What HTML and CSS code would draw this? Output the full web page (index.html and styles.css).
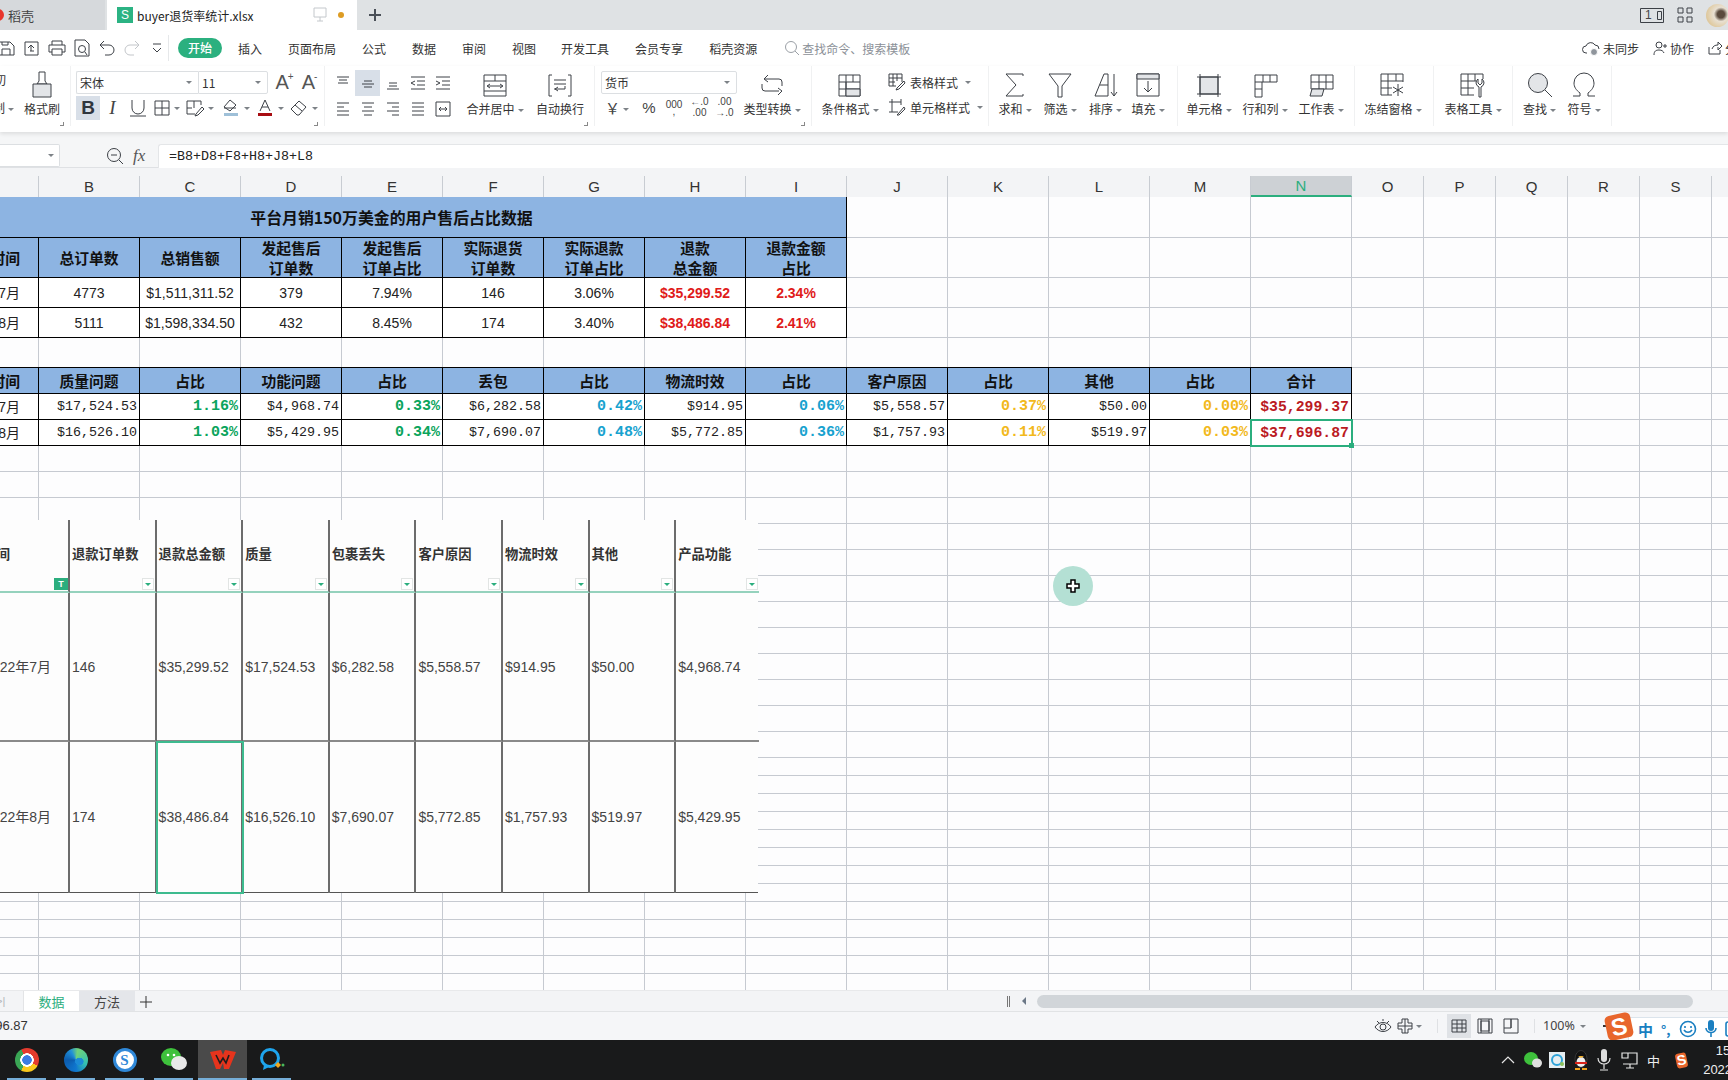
FILE: index.html
```html
<!DOCTYPE html>
<html lang="zh-CN">
<head>
<meta charset="utf-8">
<title>buyer退货率统计.xlsx</title>
<link rel="stylesheet" href="styles.css">
</head>
<body>
<div class="app">
  <header class="tabbar">
    <div class="tab-home"><span class="home-dot"></span><span>稻壳</span></div>
    <div class="tab-doc">
      <span class="s-logo">S</span><span class="doc-name">buyer退货率统计.xlsx</span>
      <svg class="doc-mon" width="14" height="16" viewBox="0 0 14 16"><path d="M1 1h12v9H1zM7 10v4M4 14h6"/></svg>
      <span class="doc-dot"></span>
    </div>
    <svg class="tab-plus" width="14" height="14" viewBox="0 0 14 14"><path d="M7 1v12M1 7h12"/></svg>
    <div class="tab-right">
      <svg class="ln" width="24" height="15" viewBox="0 0 24 15"><path d="M.5.5h23v14H.5zM17.500 3.500h4v8h-4z"/></svg>
      <span class="one">1</span>
      <svg class="ln grid4" width="16" height="16" viewBox="0 0 16 16"><path d="M1 1h5v5H1zM10 1h5v5h-5zM1 10h5v5H1zM10 10h5v5h-5z"/></svg>
      <span class="avatar"></span>
    </div>
  </header>

  <nav class="menubar">
    <div class="quick">
      <svg class="ln" width="18" height="18" viewBox="0 0 18 18"><path d="M1 3h11l4 4v9H1zM4 16v-6h8v6M4 3v3h6V3"/></svg>
      <svg class="ln" width="18" height="18" viewBox="0 0 18 18"><path d="M2 3h13v13H2zM5 9l3-3 3 3M8 6v6M7 12h4"/></svg>
      <svg class="ln" width="18" height="18" viewBox="0 0 18 18"><path d="M4 6V2h10v4M4 13H1V6h16v7h-3M4 10h10v6H4z"/></svg>
      <svg class="ln" width="18" height="18" viewBox="0 0 18 18"><path d="M2 1h10l4 4v12H2zM12 13l2 3"/><circle cx="9" cy="10" r="3.500"/></svg>
      <svg class="ln" width="18" height="18" viewBox="0 0 18 18"><path d="M6 2L2 6l4 4M2 6h9a5 5 0 010 10H7"/></svg>
      <svg class="ln light" width="18" height="18" viewBox="0 0 18 18"><path d="M12 2l4 4-4 4M16 6H7a5 5 0 000 10h4"/></svg>
      <svg class="ln" width="18" height="18" viewBox="0 0 18 18"><path d="M5 5h8M5 9l4 4 4-4"/></svg>
    </div>
    <span class="pill">开始</span>
    <span class="m m1">插入</span><span class="m m2">页面布局</span><span class="m m3">公式</span><span class="m m3">数据</span><span class="m m3">审阅</span><span class="m m3">视图</span><span class="m m4">开发工具</span><span class="m m5">会员专享</span><span class="m m6">稻壳资源</span>
    <span class="search">
      <svg class="ln" width="16" height="16" viewBox="0 0 16 16"><circle cx="7" cy="7" r="5.500"/><path d="M11 11l4 4"/></svg>
      查找命令、搜索模板
    </span>
    <div class="menu-right">
      <svg class="ln" width="18" height="16" viewBox="0 0 18 16"><path d="M5 13H4a3.500 3.500 0 010-7 5 5 0 019-1 4 4 0 014 4"/><circle class="fillgrey" cx="12" cy="12" r="3.500"/></svg>
      <span>未同步</span>
      <svg class="ln ms" width="14" height="15" viewBox="0 0 14 15"><circle cx="6" cy="4" r="3"/><path d="M1 14c0-4 2-5 5-5s4 1 5 3M10 5h4M12 3v4"/></svg>
      <span>协作</span>
      <svg class="ln ms" width="14" height="14" viewBox="0 0 14 14"><path d="M1 6v7h11V9M4 8c1-3 3-4 6-4V1l4 4-4 4V6"/></svg>
      <span>分享</span>
    </div>
  </nav>

  <section class="ribbon">
    <div class="g g0">
      <div class="clip-col"><span class="clip-a">切</span><span class="clip-b">制<i class="car"></i></span></div>
      <div class="big w48 ml4">
        <svg class="ln" width="28" height="28" viewBox="0 0 28 28"><path d="M11 1h6v9l2 3H9l2-3z"/><path class="fl" d="M5 13h18v13H5z"/></svg>
        <span class="lb">格式刷</span>
      </div>
      <i class="launch"></i>
    </div>

    <div class="g g1">
      <div class="two">
        <div class="row1">
          <div class="sel sel-font"><span class="sel-a">宋体</span><i class="car"></i></div>
          <div class="sel sel-size"><span class="sel-a">11</span><i class="car"></i></div>
          <span class="a-big">A<sup>+</sup></span><span class="a-big">A<sup>-</sup></span>
        </div>
        <div class="row2">
          <span class="t t-b">B</span>
          <span class="t w25 t-i">I</span>
          <span class="t w25"><svg class="ln" width="16" height="18" viewBox="0 0 16 18"><path d="M2 1v8a6 6 0 0012 0V1M0 17h16"/></svg></span>
          <span class="t w34"><svg class="ln" width="16" height="16" viewBox="0 0 16 16"><path d="M1 1h14v14H1zM8 1v14M1 8h14"/></svg><i class="car"></i></span>
          <span class="t w34 w35"><svg class="ln" width="18" height="18" viewBox="0 0 18 18"><path d="M1 2h14v4M1 2v13h8M8 2v7M1 9h5M10 15l6-7 2 2-6 6-3 1z"/></svg><i class="car"></i></span>
          <span class="t w34"><svg class="ln" width="18" height="18" viewBox="0 0 18 18"><path d="M8 1l6 5-6 6-6-4zM2 9h12"/><path class="blue" d="M2 14h14v3H2z"/></svg><i class="car"></i></span>
          <span class="t w34"><svg width="18" height="18" viewBox="0 0 18 18"><path class="ln" d="M4 12L9 1l5 11M6 8h6"/><path class="dred" d="M2 14h14v3H2z"/></svg><i class="car"></i></span>
          <span class="t w34"><svg class="ln" width="18" height="18" viewBox="0 0 18 18"><path d="M1 10l8-8 7 6-7 8H7zM5 6l7 6"/></svg><i class="car"></i></span>
        </div>
      </div>
      <i class="launch"></i>
    </div>

    <div class="g g2">
      <div class="two">
        <div class="row1 align">
          <span class="al"><svg class="ln" width="14" height="14" viewBox="0 0 14 14"><path d="M1 1h12M3 4h8M2 7h10"/></svg></span>
          <span class="al on"><svg class="ln" width="14" height="14" viewBox="0 0 14 14"><path d="M3 5h8M1 8h12M3 11h8"/></svg></span>
          <span class="al"><svg class="ln" width="14" height="14" viewBox="0 0 14 14"><path d="M3 7h8M3 10h8M1 13h12"/></svg></span>
          <span class="al"><svg class="ln" width="16" height="14" viewBox="0 0 16 14"><path d="M1 1h14M7 5h8M7 9h8M1 13h14M5 5L1 7l4 2"/></svg></span>
          <span class="al"><svg class="ln" width="16" height="14" viewBox="0 0 16 14"><path d="M1 1h14M7 5h8M7 9h8M1 13h14M1 5l4 2-4 2"/></svg></span>
        </div>
        <div class="row2 align">
          <span class="al"><svg class="ln" width="14" height="14" viewBox="0 0 14 14"><path d="M1 1h12M1 5h7M1 9h12M1 13h12"/></svg></span>
          <span class="al"><svg class="ln" width="14" height="14" viewBox="0 0 14 14"><path d="M1 1h12M3 5h8M1 9h12M3 13h8"/></svg></span>
          <span class="al"><svg class="ln" width="14" height="14" viewBox="0 0 14 14"><path d="M1 1h12M6 5h7M1 9h12M6 13h7"/></svg></span>
          <span class="al"><svg class="ln" width="14" height="14" viewBox="0 0 14 14"><path d="M1 1h12M1 5h12M1 9h12M1 13h12"/></svg></span>
          <span class="al"><svg class="ln" width="16" height="16" viewBox="0 0 16 16"><path d="M1 1v14M15 1v14M1 1h14M1 15h14M4 8h8M6 6L4 8l2 2M10 6l2 2-2 2"/></svg></span>
        </div>
      </div>
      <div class="big w64 ml8">
        <svg class="ln" width="28" height="28" viewBox="0 0 28 28"><path d="M3 4h22v21H3zM3 10h22M14 4v6M3 20h22M7 15h14M9 13l-3 2 3 2M19 13l3 2-3 2"/></svg>
        <span class="lb">合并居中<i class="car"></i></span>
      </div>
      <div class="big w66">
        <svg class="ln" width="28" height="28" viewBox="0 0 28 28"><path d="M6 4H3v21h3M22 4h3v21h-3M8 9h12M8 13h12M8 18h11v-3M12 16l-3 2 3 2"/></svg>
        <span class="lb">自动换行</span>
      </div>
      <i class="launch"></i>
    </div>

    <div class="g g3">
      <div class="two">
        <div class="row1"><div class="sel sel-num"><span class="sel-a">货币</span><i class="car"></i></div></div>
        <div class="row2 nums">
          <span class="n n-y">￥<i class="car"></i></span>
          <span class="n n-p">%</span>
          <span class="n n-k">000<b>,</b></span>
          <span class="n n-d">←.0<br>.00</span>
          <span class="n n-d">.00<br>→.0</span>
        </div>
      </div>
      <div class="big w70">
        <svg class="ln" width="28" height="28" viewBox="0 0 28 28"><path d="M7 8h14a3 3 0 013 3v4M7 20h14M4 13v4a3 3 0 003 3M10 4L6 8l4 3M20 17l4 3-4 4"/></svg>
        <span class="lb">类型转换<i class="car"></i></span>
      </div>
      <i class="launch"></i>
    </div>

    <div class="g g4">
      <div class="big w70">
        <svg class="ln" width="28" height="28" viewBox="0 0 28 28"><path d="M3 4h21v21H3zM3 11h21M3 18h21M10 4v21M17 4v7M17 18v7M10 11v7"/><path class="fl" d="M10 18h14v7H10z"/></svg>
        <span class="lb">条件格式<i class="car"></i></span>
      </div>
      <div class="small-col">
        <div class="sm"><svg class="ln" width="18" height="18" viewBox="0 0 18 18"><path d="M1 1h13v8M1 1v12h7M1 5h13M1 9h6M5 1v12M9 1v7M9 15l7-7 1 2-6 6-3 1z"/></svg><span>表格样式</span><i class="car"></i></div>
        <div class="sm"><svg class="ln" width="18" height="18" viewBox="0 0 18 18"><path d="M1 4h12M4 1v13h6M13 1v6M1 14h3M10 16l6-7 1 2-6 6-2 0z"/></svg><span>单元格样式</span><i class="car"></i></div>
      </div>
    </div>

    <div class="g g5">
      <div class="big w44"><svg class="ln" width="28" height="28" viewBox="0 0 28 28"><path d="M22 5V3H5l10 11L5 25h17v-2"/></svg><span class="lb">求和<i class="car"></i></span></div>
      <div class="big w46"><svg class="ln" width="28" height="28" viewBox="0 0 28 28"><path d="M3 3h22L16 15v11h-4V15z"/></svg><span class="lb">筛选<i class="car"></i></span></div>
      <div class="big w45"><svg class="ln" width="28" height="28" viewBox="0 0 28 28"><path d="M3 25L12 3h4v22zM8 14h8M22 3v22M19 21l3 4 3-4"/></svg><span class="lb">排序<i class="car"></i></span></div>
      <div class="big w40"><svg class="ln" width="28" height="28" viewBox="0 0 28 28"><path d="M3 3h22v22H3zM14 10v11M10 17l4 4 4-4"/><path class="fl" d="M3 3h22v5H3z"/></svg><span class="lb">填充<i class="car"></i></span></div>
    </div>

    <div class="g g6">
      <div class="big w56"><svg class="ln" width="28" height="28" viewBox="0 0 28 28"><path class="fl" d="M5 6h18v17H5z"/><path d="M5 3v23M23 3v23M2 6h24M2 23h24"/></svg><span class="lb">单元格<i class="car"></i></span></div>
      <div class="big w56"><svg class="ln" width="28" height="28" viewBox="0 0 28 28"><path d="M4 4h22v7H4zM12 4v7M19 4v7M4 11v15h7V11M4 18h7"/></svg><span class="lb">行和列<i class="car"></i></span></div>
      <div class="big w56"><svg class="ln" width="28" height="28" viewBox="0 0 28 28"><path d="M4 4h22v14H4zM4 11h22M12 4v14M19 4v14"/><path class="fl" d="M5 18h12l-2 7H3z"/></svg><span class="lb">工作表<i class="car"></i></span></div>
    </div>

    <div class="g g7">
      <div class="big w76"><svg class="ln" width="28" height="28" viewBox="0 0 28 28"><path d="M2 3h22v8M2 3v21h11M2 10h22M2 17h11M9 3v21M17 3v7M19 13v12M14 16l10 6M24 16l-10 6"/></svg><span class="lb">冻结窗格<i class="car"></i></span></div>
    </div>

    <div class="g g8">
      <div class="big w76"><svg class="ln" width="28" height="28" viewBox="0 0 28 28"><path d="M2 3h22v5M2 3v21h13M2 10h15M2 17h13M9 3v21M16 3v7M20 26v-10a5 5 0 01-3-4 5 5 0 012-4v4l2 2 2-2V8a5 5 0 012 4 5 5 0 01-3 4v10z"/></svg><span class="lb">表格工具<i class="car"></i></span></div>
    </div>

    <div class="g g9">
      <div class="big w45"><svg class="ln" width="28" height="28" viewBox="0 0 28 28"><circle class="fl" cx="12" cy="12" r="9.500"/><path d="M19 19l7 7"/></svg><span class="lb">查找<i class="car"></i></span></div>
      <div class="big w44"><svg class="ln" width="28" height="28" viewBox="0 0 28 28"><path d="M3 25h7v-3C6 19 4 16 4 12a10 10 0 0120 0c0 4-2 7-6 10v3h7"/></svg><span class="lb">符号<i class="car"></i></span></div>
    </div>
  </section>

  <section class="formula">
    <div class="namebox"><i class="car"></i></div>
    <svg class="ln zoomic" width="18" height="18" viewBox="0 0 18 18"><circle cx="8" cy="8" r="6.500"/><path d="M13 13l4 4M5 8h6"/></svg>
    <span class="fx">fx</span>
    <div class="finput">=B8+D8+F8+H8+J8+L8</div>
  </section>

  <div class="colhead">
    <span></span><span>B</span><span>C</span><span>D</span><span>E</span><span>F</span><span>G</span><span>H</span><span>I</span><span>J</span><span>K</span><span>L</span><span>M</span><span class="cur">N</span><span>O</span><span>P</span><span>Q</span><span>R</span><span>S</span>
  </div>

  <main class="sheet">
    <div class="row r41"><div class="c title span9">平台月销150万美金的用户售后占比数据</div></div>
    <div class="row r40">
      <div class="c h fa">时间</div><div class="c h">总订单数</div><div class="c h">总销售额</div><div class="c h">发起售后<br>订单数</div><div class="c h">发起售后<br>订单占比</div><div class="c h">实际退货<br>订单数</div><div class="c h">实际退款<br>订单占比</div><div class="c h">退款<br>总金额</div><div class="c h">退款金额<br>占比</div>
    </div>
    <div class="row r30">
      <div class="c v fa">2022年7月</div><div class="c v">4773</div><div class="c v">$1,511,311.52</div><div class="c v">379</div><div class="c v">7.94%</div><div class="c v">146</div><div class="c v">3.06%</div><div class="c v red">$35,299.52</div><div class="c v red">2.34%</div>
    </div>
    <div class="row r30">
      <div class="c v fa">2022年8月</div><div class="c v">5111</div><div class="c v">$1,598,334.50</div><div class="c v">432</div><div class="c v">8.45%</div><div class="c v">174</div><div class="c v">3.40%</div><div class="c v red">$38,486.84</div><div class="c v red">2.41%</div>
    </div>
    <div class="row r30"></div>
    <div class="row r26">
      <div class="c h top fa">时间</div><div class="c h top">质量问题</div><div class="c h top">占比</div><div class="c h top">功能问题</div><div class="c h top">占比</div><div class="c h top">丢包</div><div class="c h top">占比</div><div class="c h top">物流时效</div><div class="c h top">占比</div><div class="c h top">客户原因</div><div class="c h top">占比</div><div class="c h top">其他</div><div class="c h top">占比</div><div class="c h top">合计</div>
    </div>
    <div class="row r26">
      <div class="c v fa">2022年7月</div><div class="c m-v">$17,524.53</div><div class="c pc gr">1.16%</div><div class="c m-v">$4,968.74</div><div class="c pc gr">0.33%</div><div class="c m-v">$6,282.58</div><div class="c pc cy">0.42%</div><div class="c m-v">$914.95</div><div class="c pc cy">0.06%</div><div class="c m-v">$5,558.57</div><div class="c pc ye">0.37%</div><div class="c m-v">$50.00</div><div class="c pc ye">0.00%</div><div class="c tot">$35,299.37</div>
    </div>
    <div class="row r26">
      <div class="c v fa">2022年8月</div><div class="c m-v">$16,526.10</div><div class="c pc gr">1.03%</div><div class="c m-v">$5,429.95</div><div class="c pc gr">0.34%</div><div class="c m-v">$7,690.07</div><div class="c pc cy">0.48%</div><div class="c m-v">$5,772.85</div><div class="c pc cy">0.36%</div><div class="c m-v">$1,757.93</div><div class="c pc ye">0.11%</div><div class="c m-v">$519.97</div><div class="c pc ye">0.03%</div><div class="c tot selcell">$37,696.87<i class="handle"></i></div>
    </div>
    <div class="row r26"></div><div class="row r26"></div><div class="row r26"></div><div class="row r26"></div><div class="row r26"></div><div class="row r26"></div><div class="row r26"></div><div class="row r26"></div><div class="row r26"></div><div class="row r26"></div><div class="row r26"></div><div class="row r26"></div>
    <div class="row r18"></div><div class="row r18"></div><div class="row r18"></div><div class="row r18"></div><div class="row r18"></div><div class="row r18"></div><div class="row r18"></div><div class="row r18"></div><div class="row r18"></div><div class="row r18"></div><div class="row r18"></div><div class="row r18"></div>

    <figure class="shot">
      <div class="ph ph0">间<i class="flt on">T</i></div>
      <div class="ph">退款订单数<i class="flt"></i></div><div class="ph">退款总金额<i class="flt"></i></div><div class="ph">质量<i class="flt"></i></div><div class="ph">包裹丢失<i class="flt"></i></div><div class="ph">客户原因<i class="flt"></i></div><div class="ph">物流时效<i class="flt"></i></div><div class="ph">其他<i class="flt"></i></div><div class="ph last">产品功能<i class="flt"></i></div>
      <div class="pd pd0 pr1">2022年7月</div><div class="pd pr1">146</div><div class="pd pr1">$35,299.52</div><div class="pd pr1">$17,524.53</div><div class="pd pr1">$6,282.58</div><div class="pd pr1">$5,558.57</div><div class="pd pr1">$914.95</div><div class="pd pr1">$50.00</div><div class="pd pr1 last">$4,968.74</div>
      <div class="pd pd0">2022年8月</div><div class="pd">174</div><div class="pd picked">$38,486.84</div><div class="pd">$16,526.10</div><div class="pd">$7,690.07</div><div class="pd">$5,772.85</div><div class="pd">$1,757.93</div><div class="pd">$519.97</div><div class="pd last">$5,429.95</div>
    </figure>

    <div class="cursor"><svg width="14" height="14" viewBox="0 0 14 14"><path d="M5 1h4v4h4v4H9v4H5V9H1V5h4z"/></svg></div>
  </main>

  <div class="sheettabs">
    <span class="nav-end">&gt;|</span>
    <span class="st on">数据</span>
    <span class="st">方法</span>
    <svg class="st-plus" width="14" height="14" viewBox="0 0 14 14"><path d="M7 1v12M1 7h12"/></svg>
    <div class="hscroll">
      <i class="split"></i>
      <i class="arrow"></i>
      <i class="thumb"></i>
    </div>
  </div>

  <footer class="status">
    <span class="sum">696.87</span>
    <div class="st-right">
      <svg class="ln" width="18" height="16" viewBox="0 0 18 16"><path d="M1 9c4-6 12-6 16 0-4 6-12 6-16 0zM3 3l2 2M9 1v2M15 3l-2 2"/><circle cx="9" cy="9" r="3"/></svg>
      <svg class="ln gap1" width="16" height="16" viewBox="0 0 16 16"><path d="M5 1h6v4h4v6h-4v4H5v-4H1V5h4zM1 8h14M8 1v14"/></svg><i class="car"></i>
      <i class="vdiv d1"></i>
      <span class="view on"><svg class="ln" width="16" height="14" viewBox="0 0 16 14"><path d="M1 1h14v12H1zM1 5h14M1 9h14M6 1v12M11 1v12"/></svg></span>
      <span class="view"><svg class="ln" width="16" height="16" viewBox="0 0 16 16"><path d="M1 1h14v14H1zM4 3h8v10H4zM4 1v14M12 1v14"/></svg></span>
      <span class="view"><svg class="ln" width="16" height="16" viewBox="0 0 16 16"><path d="M1 1h14v14H1zM1 10h7V1M8 10V1"/></svg></span>
      <i class="vdiv d2"></i>
      <span class="pct">100%</span><i class="car"></i>
      <i class="minus"></i>
    </div>
  </footer>

  <div class="ime">
    <span class="ime-zh">中</span><span class="ime-dot">°,</span>
    <svg width="18" height="18" viewBox="0 0 18 18" class="blueln"><circle cx="9" cy="9" r="7.500"/><path d="M5 10c2 3 6 3 8 0M6 6v2M12 6v2"/></svg>
    <svg width="12" height="18" viewBox="0 0 12 18"><rect class="bluef" x="3" y="0" width="6" height="11" rx="3"/><path class="blueln" d="M1 8c0 6 10 6 10 0M6 13v4"/></svg>
    <svg width="10" height="18" viewBox="0 0 10 18" class="blueln"><rect x="1" y="2" width="14" height="14" rx="2"/></svg>
  </div>
  <div class="sogou">S</div>

  <div class="taskbar">
    <div class="tk run"><span class="chrome"></span></div>
    <div class="tk run"><span class="edge"></span></div>
    <div class="tk run"><span class="sbrowser">S</span></div>
    <div class="tk run"><svg width="26" height="24" viewBox="0 0 26 24"><ellipse cx="10" cy="9" rx="10" ry="9" fill="#3ec13c"/><ellipse cx="18" cy="15" rx="8" ry="7" fill="#e9e9e9"/><circle cx="7" cy="7" r="1.300" fill="#fff"/><circle cx="13" cy="7" r="1.300" fill="#fff"/></svg></div>
    <div class="tk run act"><svg width="26" height="22" viewBox="0 0 26 22"><path d="M0 3l11-2 2 5 2-5 11 2-7 17h-5l-1-6-3 6H6z" fill="#e5341d"/><path d="M6 6l4 8 3-5 3 5 3-8" fill="none" stroke="#1d1d1d" stroke-width="1.600"/></svg></div>
    <div class="tk run"><svg width="26" height="26" viewBox="0 0 26 26"><circle cx="11" cy="11" r="8.500" fill="none" stroke="#1ea5ee" stroke-width="3"/><path d="M5 18l-1 5 6-3" fill="#1ea5ee"/><path d="M19 15l3 3-3 3-3-3z" fill="#f1a51d"/><circle cx="24" cy="18" r="1.500" fill="#49b95a"/></svg></div>
    <div class="tray">
      <svg width="14" height="8" viewBox="0 0 14 8" class="wln"><path d="M1 7l6-6 6 6"/></svg>
      <svg width="18" height="16" viewBox="0 0 18 16"><ellipse cx="7" cy="6.500" rx="7" ry="6.500" fill="#3ec13c"/><ellipse cx="13" cy="11" rx="5" ry="4.500" fill="#dfdfdf"/></svg>
      <span class="qb"><svg width="16" height="16" viewBox="0 0 16 16"><circle cx="8" cy="8" r="5" fill="none" stroke="#2ea3d9" stroke-width="2"/><circle cx="13" cy="12" r="2" fill="#8bc05a"/></svg></span>
      <svg width="16" height="20" viewBox="0 0 16 20"><ellipse cx="8" cy="9" rx="6" ry="8.500" fill="#111" stroke="#555" stroke-width=".5"/><ellipse cx="8" cy="12" rx="4.500" ry="5" fill="#eee"/><path d="M5 6h6l-3 2z" fill="#f3b12c"/><path d="M2 12h12v2H2z" fill="#d9241b"/><path d="M2 18h5v2H2zM9 18h5v2H9z" fill="#f3a51c"/></svg>
      <svg width="14" height="22" viewBox="0 0 14 22"><rect x="4" y="0" width="6" height="13" rx="3" fill="#ddd"/><path class="wln" d="M1 9c0 8 12 8 12 0M7 15v5M3 21h8"/></svg>
      <svg width="18" height="18" viewBox="0 0 18 18" class="wln net"><path d="M5 2h12v11H3M2 2h6v5H2zM10 13v4M6 17h8"/></svg>
      <span class="tray-zh">中</span>
      <span class="tray-s">S</span>
      <div class="clock"><span>15:32</span><span>2022/9/15</span></div>
    </div>
  </div>
</div>
</body>
</html>
```

FILE: styles.css
```css
* { box-sizing: border-box; }
html, body { margin: 0; padding: 0; }
body { font-family: "Noto Sans CJK SC", "Noto Sans", sans-serif; color: #333; background: #fff; }
.app { position: relative; width: 1728px; height: 1080px; overflow: hidden; display: flex; flex-direction: column; }
i { font-style: normal; }
svg { display: block; flex: none; }
.ln, .ln path, .ln circle { fill: none; stroke: #3c4046; stroke-width: 1; }
svg .ln { fill: none; stroke: #3c4046; stroke-width: 1; }
.ln.light path { stroke: #c3c6ca; }
.ln .fl, .ln path.fl, .ln circle.fl { fill: #e3e5e8; stroke: #3c4046; }
.ln .blue { fill: #9fc0d8; stroke: none; }
.dred { fill: #a80d12; stroke: none; }
.ln .fillgrey { fill: #8f959c; stroke: #fff; }
.car { display: inline-block; width: 0; height: 0; border-left: 3px solid transparent; border-right: 3px solid transparent; border-top: 3px solid #7d8287; margin-left: 3px; vertical-align: middle; flex: none; }

/* title tabs */
.tabbar { height: 30px; background: #dfe2e4; display: flex; align-items: stretch; flex: none; }
.tab-home { width: 105px; background: #d6d9dc; display: flex; align-items: center; font-size: 13px; color: #444; padding-left: 6px; overflow: hidden; }
.home-dot { width: 12px; height: 12px; border-radius: 50%; background: #e8352b; margin-left: -14px; margin-right: 4px; flex: none; }
.tab-doc { width: 250px; margin-left: 2px; background: #fff; display: flex; align-items: center; padding-left: 10px; position: relative; }
.s-logo { width: 16px; height: 16px; background: #2bb383; color: #fff; font: 12px/16px "Liberation Sans", sans-serif; text-align: center; flex: none; }
.doc-name { font-size: 12px; color: #222; margin-left: 4px; white-space: nowrap; width: 170px; }
.doc-mon { margin-left: 6px; }
.doc-mon path { fill: none; stroke: #c4c8cc; }
.doc-dot { width: 6px; height: 6px; border-radius: 50%; background: #dd9c24; margin-left: 11px; }
.tab-plus { margin: 8px 0 0 11px; }
.tab-plus path { stroke: #4a5058; stroke-width: 2; fill: none; }
.tab-right { margin-left: auto; display: flex; align-items: center; position: relative; }
.one { position: absolute; left: 5px; top: 7px; font: 12px/16px "Liberation Sans", sans-serif; color: #444; }
.grid4 { margin-left: 13px; }
.avatar { width: 23px; height: 23px; border-radius: 50%; margin: 0 1px 0 13px; background: radial-gradient(circle at 65% 45%, #5a4a3c 0 18%, #e8e0d2 36%, #d8b878 100%); margin-right: -1px; }

/* menu row */
.menubar { height: 36px; background: #fff; display: flex; align-items: center; font-size: 12px; flex: none; }
.quick { width: 171px; margin-left: -2px; height: 26px; display: flex; align-items: center; gap: 7px; border-right: 1px solid #e6e8ea; padding-right: 4px; flex: none; }
.pill { width: 44px; height: 20px; border-radius: 10px; background: #2bb07f; color: #fff; font-weight: 500; line-height: 20px; text-align: center; margin-left: 9px; }
.m { color: #333; white-space: nowrap; }
.m1 { margin-left: 16px; }
.m2 { margin-left: 26px; }
.m3 { margin-left: 26px; }
.m4 { margin-left: 25px; }
.m5 { margin-left: 26px; }
.m6 { margin-left: 26px; }
.search { display: flex; align-items: center; gap: 2px; color: #8b9097; margin-left: 27px; }
.search .ln circle, .search .ln path { stroke: #9ba0a6; }
.menu-right { margin-left: auto; display: flex; align-items: center; gap: 3px; width: 156px; margin-right: -10px; white-space: nowrap; flex: none; }
.ms { margin-left: 11px; }

/* ribbon */
.ribbon { height: 66px; background: #fff; display: flex; box-shadow: 0 2px 4px rgba(0,0,0,.10); position: relative; z-index: 2; flex: none; font-size: 12px; }
.g { height: 60px; border-right: 1px solid #f0f1f2; display: flex; position: relative; flex: none; align-items: flex-start; }
.g0 { width: 71px; }
.g1 { width: 254px; padding-left: 5px; }
.g2 { width: 270px; padding-left: 5px; }
.g3 { width: 217px; padding-left: 6px; }
.g4 { width: 177px; padding-left: 3px; }
.g5 { width: 189px; padding-left: 4px; }
.g6 { width: 177px; padding-left: 3px; }
.g7, .g8 { width: 79px; }
.g8 { padding-left: 1px; }
.g9 { width: 99px; padding-left: 4px; }
.big { display: flex; flex-direction: column; align-items: center; padding-top: 5px; flex: none; }
.big svg { height: 28px; }
.lb { font-size: 12px; line-height: 16px; margin-top: 2px; white-space: nowrap; color: #333; }
.w40 { width: 40px; } .w44 { width: 44px; } .w45 { width: 45px; } .w46 { width: 46px; } .w48 { width: 48px; }
.w56 { width: 56px; } .w64 { width: 64px; } .w66 { width: 66px; } .w70 { width: 70px; } .w76 { width: 76px; }
.ml8 { margin-left: 8px; }
.ml4 { margin-left: 4px; }
.clip-col { width: 18px; display: flex; flex-direction: column; align-items: flex-end; padding-top: 6px; margin-left: -4px; overflow: hidden; flex: none; }
.clip-col span { line-height: 16px; white-space: nowrap; }
.clip-a { margin-right: 8px; }
.clip-b { margin-top: 12px; padding-top: 0; }
.two { display: flex; flex-direction: column; flex: none; }
.row1 { height: 24px; margin-top: 5px; display: flex; align-items: stretch; }
.row2 { height: 24px; margin-top: 1px; display: flex; align-items: stretch; }
.launch { position: absolute; right: 6px; bottom: 0; width: 4px; height: 4px; border-right: 1px solid #888; border-bottom: 1px solid #888; }
.sel { height: 23px; background: #fff; border: 1px solid #dcdfe2; display: flex; align-items: center; justify-content: space-between; padding: 0 6px 0 3px; font-size: 12px; flex: none; }
.sel-font { width: 122px; border-right: 0; border-radius: 2px 0 0 2px; }
.sel-size { width: 70px; border-radius: 0 2px 2px 0; }
.sel-num { width: 136px; border-radius: 2px; }
.a-big { font: 20px/23px "Liberation Sans", sans-serif; color: #555; width: 25px; text-align: center; margin-left: 0; }
.a-big:first-of-type { margin-left: 4px; }
.a-big sup { font-size: 10px; line-height: 0; vertical-align: 9px; margin-left: -1px; }
.t { display: flex; align-items: center; flex: none; }
.t-b { width: 24px; justify-content: center; background: #d8dfe8; font: bold 19px/24px "Liberation Sans", sans-serif; color: #30363e; }
.t-i { justify-content: center; font: italic 19px/24px "Liberation Serif", serif; color: #444; }
.w25 { width: 25px; justify-content: center; }
.w34 { width: 34px; padding-left: 3px; }
.w34:nth-child(4) { padding-left: 4px; }
.w35 { width: 35px; padding-left: 2px; }
.t .car { margin-left: 4px; }
.align { gap: 0; }
.al { width: 25px; display: flex; align-items: center; justify-content: center; flex: none; }
.row1.align { height: 26px; margin-top: 4px; }
.al.on { background: #d8dfe8; }
.nums { align-items: center; font-family: "Liberation Sans", sans-serif; color: #444; margin-top: 0; }
.n { flex: none; text-align: center; }
.n-y { width: 36px; font-size: 15px; padding-left: 4px; text-align: left; }
.n-p { width: 24px; font-size: 15px; }
.n-k { width: 26px; font-size: 10px; line-height: 10px; }
.n-k b { display: block; line-height: 4px; font-weight: 400; }
.n-d { width: 25px; font-size: 10px; line-height: 11px; }
.small-col { display: flex; flex-direction: column; padding-top: 5px; gap: 3px; margin-left: 3px; }
.sm { display: flex; align-items: center; gap: 4px; height: 22px; white-space: nowrap; }

/* formula bar */
.formula { height: 36px; background: #f5f6f7; display: flex; padding-top: 12px; border-bottom: 1px solid #dfe1e4; flex: none; align-items: flex-start; }
.namebox { width: 60px; height: 23px; background: #fff; border: 1px solid #dcdfe2; border-left: 0; display: flex; align-items: center; justify-content: flex-end; padding-right: 5px; border-radius: 0 2px 2px 0; }
.zoomic { margin: 3px 0 0 46px; }
.fx { font: italic 17px/24px "Liberation Serif", serif; color: #555; margin-left: 9px; width: 24px; }
.finput { flex: 1; height: 24px; background: #fff; border: 1px solid #e4e6e8; border-right: 0; border-bottom: 0; padding-left: 10px; font: 13.330px/24px "Liberation Mono", monospace; color: #222; margin-left: 1px; border-radius: 3px 0 0 0; }

/* column headers */
.colhead { height: 29px; padding-top: 8px; background: #f3f4f6; display: grid; grid-template-columns: 39px repeat(13, 101px) repeat(5, 72px) 1fr; flex: none; font: 15px/21px "Liberation Sans", sans-serif; color: #333; }
.colhead span { text-align: center; border-right: 1px solid #c8ccd2; }
.colhead .cur { background: #cdd1d5; color: #2bae7e; border-bottom: 2px solid #2bae7e; line-height: 19px; }

/* sheet */
.sheet { height: 793px; position: relative; overflow: hidden; flex: none; background-color: #fdfdfe;
  background-image:
    linear-gradient(#c6cad1, #c6cad1),
    repeating-linear-gradient(90deg, transparent 0 100px, #c6cad1 100px 101px),
    repeating-linear-gradient(90deg, transparent 0 71px, #c6cad1 71px 72px);
  background-size: 1px 100%, 1313px 100%, 376px 100%;
  background-position: 38px 0, 39px 0, 1352px 0;
  background-repeat: no-repeat; }
.row { display: grid; grid-template-columns: 39px repeat(13, 101px) repeat(5, 72px) 1fr; border-bottom: 1px solid #c6cad1; }
.r41 { height: 41px; } .r40 { height: 40px; } .r30 { height: 30px; } .r26 { height: 26px; } .r18 { height: 18px; }
.c { border-right: 1px solid #000; border-bottom: 1px solid #000; margin-bottom: -1px; background: #fff; display: flex; align-items: center; justify-content: center; text-align: center; white-space: nowrap; overflow: hidden; position: relative; }
.title { grid-column: span 9; background: #8db4e2; font-weight: 700; font-size: 15.900px; color: #111; padding-right: 63px; }
.h { background: #8db4e2; font-weight: 700; font-size: 14.800px; line-height: 20px; color: #111; }
.top { border-top: 1px solid #000; margin-top: -1px; }
.fa { justify-content: flex-end; padding-right: 18px; }
.v { font: 14px/20px "Liberation Sans", "Noto Sans CJK SC", sans-serif; color: #222; }
.red { color: #e01a1a; font-weight: 700; }
.m-v { justify-content: flex-end; padding-right: 2px; font: 13.330px/20px "Liberation Mono", monospace; color: #222; }
.pc { justify-content: flex-end; padding-right: 2px; font: bold 15px/20px "Liberation Mono", monospace; }
.gr { color: #0aa45c; } .cy { color: #17a2cf; } .ye { color: #f2b91c; }
.tot { justify-content: flex-end; padding-right: 2px; font: bold 14.800px/20px "Liberation Mono", monospace; color: #bb1a1f; overflow: visible; }
.selcell { outline: 2px solid #2bae7e; outline-offset: -1px; z-index: 3; }
.handle { position: absolute; right: -3px; bottom: -3px; width: 5px; height: 5px; background: #2bae7e; }

/* pasted picture */
.shot { position: absolute; left: 0; top: 323px; width: 758px; height: 373px; margin: 0; background: #fdfdfd; display: grid; grid-template-columns: 70px repeat(7, 86.600px) 82.800px; grid-template-rows: 73px 149px 151px; border-bottom: 1px solid #555; }
.ph, .pd { border-right: 2px solid #6c6c6c; position: relative; white-space: nowrap; }
.ph { font-weight: 700; font-size: 13.300px; color: #333; padding: 24px 0 0 2px; border-bottom: 2px solid #95d2bd; line-height: 20px; }
.ph0 { text-align: right; direction: rtl; padding: 24px 58px 0 0; }
.pd { font: 14px/20px "Liberation Sans", "Noto Sans CJK SC", sans-serif; color: #444; padding: 64px 0 0 2px; overflow: hidden; }
.pr1 { border-bottom: 2px solid #8a8a8a; }
.pd0 { text-align: right; padding-right: 17px; padding-left: 0; direction: rtl; }
.pd:not(.pr1) { padding-top: 65px; }
.last { border-right: 0; }
.picked { outline: 2px solid #3dbb8f; outline-offset: -1px; z-index: 2; }
.flt { position: absolute; right: 1px; bottom: 1px; width: 12px; height: 12px; background: #fff; border: 1px solid #e2e5e4; }
.flt::after { content: ""; position: absolute; left: 2px; top: 4px; border-left: 3px solid transparent; border-right: 3px solid transparent; border-top: 3px solid #2bae7e; }
.flt.on { background: #2bae7e; border: 0; color: #fff; font: bold 9px/12px "Liberation Sans", sans-serif; text-align: center; direction: ltr; width: 14px; right: 0; }
.flt.on::after { display: none; }
.cursor { position: absolute; left: 1053px; top: 369px; width: 40px; height: 40px; border-radius: 50%; background: #b4e0d4; display: flex; align-items: center; justify-content: center; }
.cursor path { fill: #fff; stroke: #000; stroke-width: 1.500; }

/* sheet tabs */
.sheettabs { height: 22px; background: #f3f4f6; display: flex; align-items: stretch; border-top: 1px solid #e8e9eb; border-bottom: 1px solid #e1e3e5; flex: none; font-size: 13px; }
.nav-end { width: 28px; color: #b3b6ba; font: 11px/20px "Liberation Sans", sans-serif; margin-left: -4px; border-right: 1px solid #e3e4e6; overflow: hidden; flex: none; }
.st { width: 56px; text-align: center; line-height: 21px; background: #e4e6ea; color: #444; flex: none; }
.st.on { background: #fff; color: #2bae7e; width: 55px; }
.st-plus { margin: 4px 0 0 4px; }
.st-plus path { fill: none; stroke: #333; }
.hscroll { margin-left: auto; width: 721px; display: flex; align-items: center; flex: none; }
.split { width: 3px; height: 11px; border-left: 1px solid #777; border-right: 1px solid #777; margin-right: 7px; }
.arrow { width: 0; height: 0; border-top: 4px solid transparent; border-bottom: 4px solid transparent; border-right: 4px solid #6c7887; margin: 0 11px 0 5px; }
.thumb { width: 656px; height: 13px; border-radius: 7px; background: #d1d5d9; }

/* status */
.status { height: 28px; background: #f5f6f8; display: flex; align-items: center; font-size: 13px; flex: none; position: relative; }
.sum { font: 13px/20px "Liberation Sans", sans-serif; margin-left: -12px; color: #333; }
.st-right { margin-left: auto; display: flex; align-items: center; width: 354px; flex: none; }
.gap1 { margin-left: 5px; }
.vdiv { width: 1px; height: 14px; background: #dfe1e4; }
.d1 { margin: 0 9px 0 15px; }
.d2 { margin: 0 8px 0 9px; }
.view { width: 24px; height: 24px; display: flex; align-items: center; justify-content: center; margin-right: 2px; }
.view.on { background: #dfe2e6; }
.pct { font: 12.500px/20px "Noto Sans", sans-serif; color: #444; width: 34px; }
.minus { width: 7px; height: 2px; background: #333; margin-left: 17px; }

.ime { position: absolute; left: 1628px; top: 1017px; width: 100px; height: 23px; background: #fff; display: flex; align-items: center; gap: 8px; padding-left: 9px; border-top: 1px solid #dbe4ec; border-left: 1px solid #dbe4ec; overflow: hidden; }
.ime-zh { color: #1a7fc1; font-weight: 700; font-size: 15px; }
.ime-dot { color: #1a7fc1; font-weight: 700; font-size: 13px; width: 14px; }
.blueln, svg path.blueln { fill: none; stroke: #1a7fc1; stroke-width: 1.600; }
.bluef { fill: #1a7fc1; }
.sogou { position: absolute; left: 1606px; top: 1014px; width: 26px; height: 25px; background: #e8662c; border-radius: 5px; transform: rotate(-12deg); color: #fff; font: bold 24px/25px "Liberation Sans", sans-serif; text-align: center; }

/* taskbar */
.taskbar { height: 40px; background: #191a1b; display: flex; padding-left: 2px; flex: none; position: relative; }
.tk { width: 49px; display: flex; align-items: center; justify-content: center; flex: none; position: relative; }
.run::after { content: ""; position: absolute; left: 5px; right: 5px; bottom: 0; height: 2px; background: #76aed8; }
.act { background: #4a4a4a; }
.act::after { left: 0; right: 0; }
.chrome { width: 24px; height: 24px; border-radius: 50%; background: radial-gradient(circle, #3b7de3 0 4.500px, #fff 5px 6.500px, transparent 7px), conic-gradient(#e33b2e 0 120deg, #f9c81d 120deg 210deg, #3aa655 210deg 330deg, #e33b2e 330deg); }
.edge { width: 24px; height: 24px; border-radius: 50%; background: radial-gradient(ellipse at 64% 56%, #1b8ad6 0 4px, transparent 4.500px), conic-gradient(from 10deg, #6fd27a, #35c0b0 100deg, #0f76cf 170deg, #0c5cae 260deg, #1f8fd8 320deg, #6fd27a); }
.sbrowser { width: 24px; height: 24px; border-radius: 50%; background: #fff; border: 3px solid #2f88d8; color: #2f88d8; font: bold 15px/18px "Liberation Serif", serif; text-align: center; }
.tray { position: absolute; left: 1501px; top: 0; height: 40px; width: 260px; display: flex; align-items: center; gap: 0; }
.wln, svg.wln path, svg path.wln { fill: none; stroke: #e6e6e6; stroke-width: 1.200; }
.tray > svg:nth-child(2) { margin-left: 9px; }
.qb { width: 16px; height: 16px; background: #e6eef2; margin-left: 7px; flex: none; }
.tray > svg:nth-child(4) { margin-left: 8px; }
.tray > svg:nth-child(5) { margin-left: 8px; }
.net { margin-left: 9px; }
.tray-zh { color: #eee; font-size: 13px; margin-left: 9px; width: 14px; }
.tray-s { width: 15px; height: 15px; background: #e8662c; border-radius: 3px; color: #fff; font: bold 14px/15px "Liberation Sans", sans-serif; text-align: center; transform: rotate(-12deg); margin-left: 16px; }
.clock { display: flex; flex-direction: column; align-items: center; color: #eee; font: 13px/19px "Liberation Sans", sans-serif; margin-left: 16px; width: 70px; white-space: nowrap; }
```
